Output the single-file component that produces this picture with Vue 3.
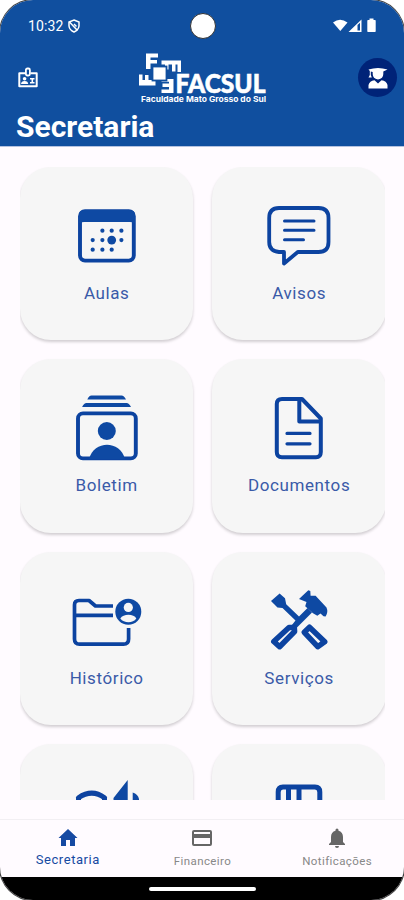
<script setup>
const cards = [
  { id: 'aulas', label: 'Aulas' },
  { id: 'avisos', label: 'Avisos' },
  { id: 'boletim', label: 'Boletim' },
  { id: 'documentos', label: 'Documentos' },
  { id: 'historico', label: 'Histórico' },
  { id: 'servicos', label: 'Serviços' },
  { id: 'extra', label: '' },
  { id: 'biblioteca', label: '' },
]
</script>

<template>
  <div class="phone">
    <header class="header">
      <div class="status">
        <span class="time">10:32</span>
        <svg class="shield" width="12" height="14" viewBox="0 0 12 14" fill="none" stroke="#fff" stroke-width="1.5">
          <path d="M6 1 L11 3 V7 Q10.600 11 6 13 Q1.400 11 1 7 V3 Z" />
          <path d="M1.500 3 L9.500 11.500" />
          <path d="M6 5 L8.500 7.500" />
        </svg>
        <span class="camera"></span>
        <svg class="signals" width="46" height="16" viewBox="0 0 46 16" fill="#fff">
          <path d="M1 4.500 Q8 -0.800 15.500 4.500 L8.300 13 Z" />
          <path fill-rule="evenodd" d="M16.500 14 L29.500 1.500 V14 Z M25.500 7 V12.500 H28 V4.800 Z" />
          <path d="M37.500 0.500 h4 v1.500 h1.500 q.7 0 .7 .7 v10.600 q0 .7 -.7 .7 h-7 q-.7 0 -.7 -.7 v-10.600 q0 -.7 .7 -.7 h1.500 z" />
        </svg>
      </div>

      <div class="brand">
        <svg class="badge" width="22" height="22" viewBox="0 0 22 22" fill="none" stroke="#fff">
          <path stroke-width="2" stroke-linejoin="round" d="M8 6.300 H2.300 V19.300 H19.700 V6.300 H13.500" />
          <rect x="8.900" y="1.500" width="4" height="7" rx="1.500" stroke-width="1.800" />
          <path stroke-width="1.600" d="M13 11.800 H17.500 M13 15.800 H17.500 M15.300 11 V16.500" />
          <circle cx="7.600" cy="11.700" r="1.800" fill="#fff" stroke="none" />
          <path fill="#fff" stroke="none" d="M4 17 Q4.200 14 7.600 14 Q11 14 11.200 17 Z" />
        </svg>
        <svg class="logo" width="130" height="52" viewBox="0 0 130 52" fill="#fff">
          <path d="M8 0.500 H20 V4.500 H12.500 V7 H19 V10.500 H12.500 V16 H8 Z" />
          <path d="M23.500 7.500 H43 V19 H39.500 V11.500 H37.500 V18.500 H34 V11.500 H30.500 V16.500 H27 V11.500 H23.500 Z" />
          <path d="M1 21.500 H4.500 V27 H7 V22 H10.500 V27 H14.500 V21.500 H17.500 V32.500 H1 Z" />
          <path d="M23.500 26 H35.500 V40 H23.500 V36.500 H31 V34 H24.500 V30.500 H31 V28.800 H23.500 Z" />
          <rect x="14.500" y="13.500" width="14" height="14" stroke="#104f9f" stroke-width="1.800" />
          <text class="logo-name" x="37.500" y="39.700" textLength="90" lengthAdjust="spacingAndGlyphs">FACSUL</text>
          <text class="logo-sub" x="3" y="48.500" textLength="125" lengthAdjust="spacingAndGlyphs">Faculdade Mato Grosso do Sul</text>
        </svg>
        <span class="avatar">
          <svg width="22" height="24" viewBox="0 0 22 24" fill="#fff">
            <path d="M1.500 3.600 Q11 0.200 20.500 3.600 L16.300 5.500 V8 Q16.300 12.500 11 13.500 Q5.700 12.500 5.700 8 V6 L3.800 5.500 V9 L4.800 11.500 H1.500 L2.800 9 V5 Z" />
            <path d="M1.500 22.500 V19 Q2.500 15 7.500 14.300 L11 17.500 L14.500 14.300 Q19.500 15 20.500 19 V22.500 Z" />
          </svg>
        </span>
      </div>
      <h1 class="title">Secretaria</h1>
    </header>

    <main class="content">
      <div v-for="card in cards" :key="card.id" class="card">
        <svg class="icon" width="80" height="76" viewBox="0 0 80 76">
          <template v-if="card.id === 'aulas'">
            <rect class="line" x="13" y="14.200" width="53.800" height="49.400" rx="5" stroke-width="3.900" />
            <path class="solid" d="M12 26 V18 Q12 13 18 13 H62 Q68 13 68 18 V26 H66 Q65.500 25 63 25 H17 Q14.500 25 14 26 Z" />
            <g class="solid">
              <circle v-for="x in [35.400, 44.700, 54.400]" :key="'a' + x" :cx="x" cy="33.700" r="2.100" />
              <circle v-for="x in [25.700, 35.400, 54.400]" :key="'b' + x" :cx="x" cy="43.100" r="2.100" />
              <circle v-for="x in [25.700, 35.400, 44.700]" :key="'c' + x" :cx="x" cy="52.700" r="2.100" />
              <circle cx="44.700" cy="43.100" r="4.400" />
            </g>
          </template>
          <template v-else-if="card.id === 'avisos'">
            <path class="line" stroke-width="3.800" d="M20 11 H59.500 Q69.500 11 69.500 21 V45 Q69.500 55 59.500 55 H38.800 L25 66.500 V55 H20 Q10.200 54 10.200 45 V21 Q10.200 11 20 11 Z" />
            <path class="line" stroke-width="3" d="M25.500 24 H55 M25.500 33.200 H55 M25.500 42.700 H44.500" />
          </template>
          <template v-else-if="card.id === 'boletim'">
            <path class="solid" d="M24.500 6.500 H54.500 Q57 6.500 59 10.400 H20.300 Q22 6.500 24.500 6.500 Z M19.500 14 H59.500 Q62 14 64 17.900 H15.100 Q17 14 19.500 14 Z" />
            <rect class="line" x="11" y="24.400" width="57.800" height="45" rx="5" stroke-width="3.900" />
            <circle class="solid" cx="39.800" cy="42" r="9" />
            <path class="solid" d="M22 70 C27 51 53 51 58 70 Z" />
          </template>
          <template v-else-if="card.id === 'documentos'">
            <path class="line" stroke-width="4" d="M23 10 H43 L61.800 29.500 V63 Q61.800 68.200 57 68.200 H23 Q17.800 68.200 17.800 63 V15 Q17.800 10 23 10 Z M40.300 10 V32.500 H61.800" />
            <path class="line" stroke-width="3.200" d="M28 44.400 H51 M28 54.800 H51" />
          </template>
          <template v-else-if="card.id === 'historico'">
            <path class="line butt" stroke-width="3.700" d="M46 24 H28.500 L22 18.500 H12 Q7.500 18.500 7.500 23 V57 Q7.500 62.200 12.500 62.200 H56.500 Q61.600 62.200 61.600 57 V46 M7.500 33.300 H46" />
            <circle class="solid" cx="61.300" cy="29.700" r="13" />
            <circle class="paper" cx="61.300" cy="25.400" r="4.600" />
            <path class="paper" d="M53.300 36.500 C56 31.500 67 31.500 69.300 36.500 C66 41.500 57 41.500 53.300 36.500 Z" />
          </template>
          <template v-else-if="card.id === 'servicos'">
            <path class="solid" d="M12 19 L20.600 11.500 L26 16.300 L27.200 22.200 L40 34.500 L48.500 26 L53 30.500 L37 46.500 L32.500 43.500 L36.500 38.500 L23.500 26 L18.500 25.500 Z" />
            <path class="solid" d="M40 17 L49.300 8.200 L51.300 9 L51.600 13.700 L56.600 13.700 L67.500 25.500 Q69.500 30 66.600 34.500 L64.500 34.300 L61.500 31.500 L58.300 33.700 L54 31.300 L46.200 24.300 L47.500 20 Z" />
            <path class="line" stroke-width="5.500" d="M30 45.500 H35.300 L35.600 49.500 L20.600 64.700 L14.800 59.500 Z M45.300 50.300 L50.500 45.200 L65.700 59.800 L58.700 64.700 Z" />
          </template>
          <template v-else-if="card.id === 'extra'">
            <path class="line" stroke-width="5" d="M11.500 23.700 Q25 14.500 37.500 23.700 M11.500 24 V30 M37.500 24 V30" />
            <path class="solid" d="M46.500 26 V24 L60.700 6 V30 H46.500 Z M65.700 18.500 Q71 20 72 25 V30 H65.700 Z" />
          </template>
          <template v-else>
            <path class="line" stroke-width="5" d="M19.200 40 V18 Q19.200 13 24 13 H56 Q60.800 13 60.800 18 V40 M29.500 13 V40 M40 13 V40" />
          </template>
        </svg>
        <span class="label">{{ card.label }}</span>
      </div>
    </main>

    <nav class="tabs">
      <a class="tab active">
        <svg width="24" height="24" viewBox="0 0 24 24"><path d="M10 20 V14 H14 V20 H19 V12 H21.500 L12 3 L2.500 12 H5 V20 Z" fill="currentColor" /></svg>
        <span>Secretaria</span>
      </a>
      <a class="tab">
        <svg width="24" height="24" viewBox="0 0 24 24"><path fill="#666" fill-rule="evenodd" d="M4 4 H20 Q22 4 22 6 V18 Q22 20 20 20 H4 Q2 20 2 18 V6 Q2 4 4 4 Z M4 6 V8 H20 V6 Z M4 12 V18 H20 V12 Z" /></svg>
        <span>Financeiro</span>
      </a>
      <a class="tab">
        <svg width="24" height="24" viewBox="0 0 24 24"><path fill="#666" d="M12 22 q2 0 2 -2 h-4 q0 2 2 2 z M18 16 v-5 c0 -3.100 -1.600 -5.600 -4.500 -6.300 V4 a1.500 1.500 0 0 0 -3 0 v.7 C7.600 5.400 6 7.900 6 11 v5 l-2 2 v1 h16 v-1 z" /></svg>
        <span>Notificações</span>
      </a>
    </nav>
    <footer class="gesture"><span></span></footer>
  </div>
</template>

<style>
body {
  background: #fff;
}
</style>

<style scoped>
.phone {
  width: 404px;
  height: 900px;
  box-sizing: border-box;
  display: flex;
  flex-direction: column;
  overflow: hidden;
  border-radius: 33px;
  background: #fffbff;
  box-shadow: 0 0 0 1px #444;
  font-family: Roboto, sans-serif;
}
.header {
  height: 147px;
  flex: none;
  display: flex;
  flex-direction: column;
  background: #104f9f;
  color: #fff;
  border-bottom: 1px solid #b4c2e0;
  box-sizing: border-box;
}
.status {
  display: grid;
  grid-template-columns: 36px 153px 26px 1fr auto;
  align-items: center;
  height: 51px;
  padding: 0 26px 0 28px;
}
.time {
  font-size: 14px;
  font-weight: 400;
  letter-spacing: 0.1px;
}
.shield {
  margin-left: 4px;
}
.camera {
  width: 24px;
  height: 24px;
  margin-left: -27px;
  border-radius: 50%;
  background: #fff;
  border: 1px solid #333;
  justify-self: start;
}
.signals {
  grid-column: 5;
}
.brand {
  display: flex;
  align-items: flex-start;
  height: 59px;
  padding: 2px 7px 0 17px;
}
.badge {
  margin-top: 14px;
}
.logo {
  margin-left: 99px;
  overflow: visible;
}
.logo-name {
  font: 900 27px Lato, sans-serif;
  stroke: #fff;
  stroke-width: 0.600px;
}
.logo-sub {
  font: 700 8px Inter, sans-serif;
}
.avatar {
  width: 39px;
  height: 39px;
  margin-top: 5px;
  margin-left: auto;
  border-radius: 50%;
  background: #002378;
  display: flex;
  align-items: center;
  justify-content: center;
}
.title {
  margin: -2px 0 0 16px;
  font-size: 30px;
  line-height: 33px;
  font-weight: 700;
}
.content {
  height: 633px;
  flex: none;
  box-sizing: border-box;
  margin: 20px 19px 0 20px;
  display: grid;
  grid-template-columns: 173.300px 173.300px;
  grid-auto-rows: 173.300px;
  gap: 19.200px;
  overflow: hidden;
}
.card {
  display: flex;
  flex-direction: column;
  align-items: center;
  padding-top: 30px;
  box-sizing: border-box;
  border-radius: 31px;
  background: #f6f6f6;
  box-shadow: 0 2px 3px rgba(0, 0, 0, 0.18);
}
.icon {
  flex: none;
}
.label {
  margin-top: 9px;
  font-size: 17px;
  line-height: 22px;
  letter-spacing: 0.600px;
  color: #3a5aa8;
}
.line {
  fill: none;
  stroke: #0c43a0;
  stroke-linecap: round;
  stroke-linejoin: round;
}
.butt {
  stroke-linecap: butt;
}
.solid {
  fill: #0e49a3;
}
.paper {
  fill: #f6f6f6;
}
.tabs {
  height: 58px;
  flex: none;
  margin-top: 19px;
  box-sizing: border-box;
  border-top: 1px solid #f2eff3;
  display: grid;
  grid-template-columns: repeat(3, 1fr);
}
.tab {
  display: flex;
  flex-direction: column;
  align-items: center;
  padding-top: 6px;
  padding-left: 1px;
  color: #888;
  font-size: 11.500px;
  line-height: 18px;
  letter-spacing: 0.400px;
}
.tab span {
  margin-top: 2px;
}
.tab.active {
  color: #164aa2;
  font-size: 13px;
  letter-spacing: 0.550px;
}
.tab.active span {
  margin-top: 1px;
}
.gesture {
  flex: 1;
  background: #000;
  display: flex;
  justify-content: center;
  align-items: center;
}
.gesture span {
  width: 107px;
  height: 4px;
  border-radius: 2px;
  background: #fff;
}
</style>
